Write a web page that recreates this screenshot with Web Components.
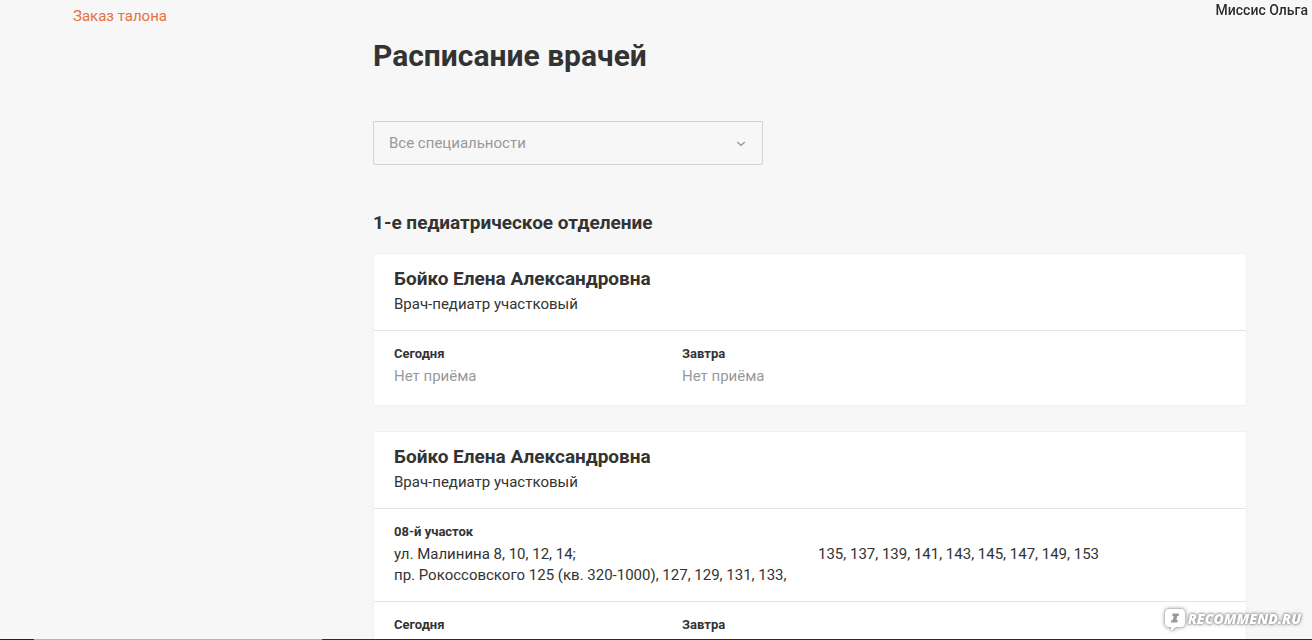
<!DOCTYPE html>
<html lang="ru">
<head>
<meta charset="utf-8">
<meta name="viewport" content="width=device-width, initial-scale=1">
<title>Расписание врачей</title>
<style>
  html { background: #f7f7f7; scrollbar-width: none; }
  body { margin: 0; font: 15px/21px Roboto, "Liberation Sans", sans-serif; color: #333; }
</style>
</head>
<body>
<schedule-page></schedule-page>

<template id="page-tpl">
  <style>
    :host { display: grid; grid-template-columns: 300px minmax(0, 874px); padding: 0 65px 40px 73px; height: 100vh; box-sizing: border-box; overflow: hidden; }
    nav { padding-top: 6px; }
    nav a { color: #e8703a; text-decoration: none; }
    main { padding-top: 36px; }
    h1 { margin: 0 0 45px; font-size: 30px; line-height: 40px; font-weight: 700; }
    h2 { margin: 46px 0 18px; font-size: 19px; line-height: 24px; font-weight: 700; }
    .cards { display: grid; gap: 25px; }
  </style>
  <nav><a href="#order">Заказ талона</a></nav>
  <main>
    <h1>Расписание врачей</h1>
    <specialty-select></specialty-select>
    <h2>1-е педиатрическое отделение</h2>
    <div class="cards">
      <doctor-card>
        <span slot="name">Бойко Елена Александровна</span>
        <span slot="role">Врач-педиатр участковый</span>
      </doctor-card>
      <doctor-card>
        <span slot="name">Бойко Елена Александровна</span>
        <span slot="role">Врач-педиатр участковый</span>
        <service-area slot="area">
          <span slot="title">08-й участок</span>
          <span>ул. Малинина 8, 10, 12, 14;<br>пр. Рокоссовского 125 (кв. 320-1000), 127, 129, 131, 133,</span>
          <span>135, 137, 139, 141, 143, 145, 147, 149, 153</span>
        </service-area>
      </doctor-card>
    </div>
  </main>
  <author-name>Миссис Ольга</author-name>
  <bottom-strip></bottom-strip>
  <site-mark></site-mark>
</template>

<template id="select-tpl">
  <style>
    :host { display: grid; align-items: center; max-width: 390px; }
    select, svg { grid-area: 1 / 1; }
    select { appearance: none; width: 100%; height: 44px; margin: 0; padding: 0 40px 0 15px; border: 1px solid #d3d3d3; border-radius: 2px; background: transparent; color: #999; font: inherit; }
    svg { justify-self: end; margin: 2px 17px 0 0; pointer-events: none; }
  </style>
  <select aria-label="Специальность"><option>Все специальности</option></select>
  <svg width="10" height="6" viewBox="0 0 10 6" fill="none" stroke="#999" stroke-width="1.3"><path d="M1.2 1 5 4.3 8.8 1"/></svg>
</template>

<template id="card-tpl">
  <style>
    :host { display: block; background: #fff; border: 1px solid #f0f0f0; border-radius: 2px; }
    header { padding: 13px 20px 15px; display: grid; gap: 3px; }
    h3 { margin: 0; font-size: 19px; line-height: 24px; font-weight: 700; }
    p { margin: 0; }
    .days { display: grid; grid-template-columns: repeat(3, 1fr); gap: 32px; padding: 15px 20px 18px; border-top: 1px solid #e4e4e4; }
    h4 { margin: 0 0 4px; font-size: 13px; line-height: 16px; font-weight: 700; }
    .none { color: #999; }
  </style>
  <header><h3><slot name="name"></slot></h3><p><slot name="role"></slot></p></header>
  <slot name="area"></slot>
  <div class="days">
    <section><h4>Сегодня</h4><p class="none">Нет приёма</p></section>
    <section><h4>Завтра</h4><p class="none">Нет приёма</p></section>
  </div>
</template>

<template id="area-tpl">
  <style>
    :host { display: block; padding: 15px 20px; border-top: 1px solid #e4e4e4; }
    h4 { margin: 0 0 4px; font-size: 13px; line-height: 16px; font-weight: 700; }
    .list { display: grid; grid-template-columns: 1fr 1fr; gap: 16px; }
  </style>
  <h4><slot name="title"></slot></h4>
  <div class="list"><slot></slot></div>
</template>

<template id="author-tpl">
  <style>
    :host { position: fixed; top: 0; right: 4px; font-size: 14px; line-height: 20px; font-weight: 500; color: #2c2c2c; text-shadow: 0 0 2px #fff, 0 0 3px #fff; }
  </style>
  <slot></slot>
</template>

<template id="strip-tpl">
  <style>
    :host { position: fixed; left: 0; right: 0; bottom: 0; height: 1px; background: linear-gradient(90deg, #222 34px, #b5b5b5 34px 322px, #2c2c2c 322px); }
  </style>
</template>

<template id="mark-tpl">
  <style>
    :host { position: fixed; right: 11px; bottom: 8px; display: flex; align-items: center; gap: 3px; color: #fff; font: italic 800 14px/20px "Open Sans", Lato, sans-serif; text-shadow: 0 0 2px #888, 0 0 3px #999, 0 0 4px #aaa; }
    span { padding-bottom: 2px; }
    svg { overflow: visible; filter: drop-shadow(0 0 1px #999) drop-shadow(0 0 2px #aaa); }
  </style>
  <svg width="20" height="24" viewBox="0 0 20 24"><path fill="#fff" d="M5 1H16Q20 1 20 5V15Q20 19 16 19H11L6 23V19H4Q0 19 0 15V5Q0 1 5 1Z"/><path fill="#999" d="M7.6 5.5H14L13.6 8H12.2L11.4 12H12.8L12.3 14.5H6L6.5 12H7.9L8.7 8H7.2Z"/></svg>
  <span>RECOMMEND.RU</span>
</template>

<script>
  const define = (name, templateId) => customElements.define(name, class extends HTMLElement {
    constructor() {
      super();
      this.attachShadow({ mode: 'open' })
        .append(document.getElementById(templateId).content.cloneNode(true));
    }
  });
  define('specialty-select', 'select-tpl');
  define('service-area', 'area-tpl');
  define('doctor-card', 'card-tpl');
  define('author-name', 'author-tpl');
  define('bottom-strip', 'strip-tpl');
  define('site-mark', 'mark-tpl');
  define('schedule-page', 'page-tpl');
</script>
</body>
</html>
